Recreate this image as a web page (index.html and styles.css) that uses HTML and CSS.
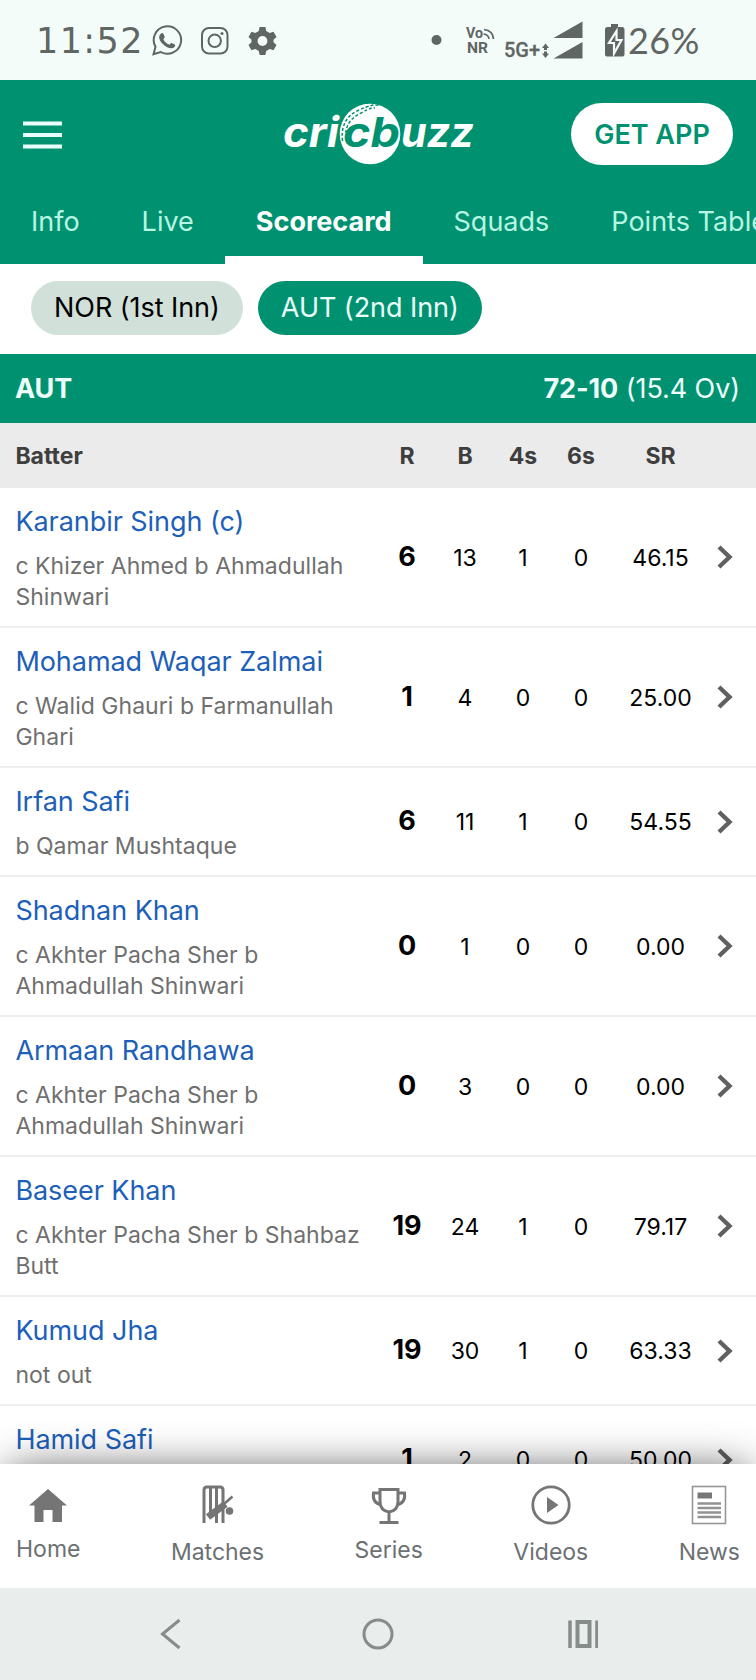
FILE: index.html
```html
<!DOCTYPE html>
<html lang="en">
<head>
<meta charset="utf-8">
<title>Cricbuzz Scorecard</title>
<link rel="stylesheet" href="styles.css">
</head>
<body>
<div class="screen">
  <header class="status">
    <span class="clock">11:52</span>
    <svg class="status-apps" width="126" height="32" viewBox="0 0 126 32" fill="none" stroke="#5f6664" stroke-width="2">
      <path d="M2.500 29.200l2-7.400a13.700 13.700 0 1 1 5.200 5.200z"/>
      <path d="M9.500 9c1.400-1.600 2.500-1 3 0l1.200 2.800c.3.900-1.400 2-1.200 2.600 1 2.400 3.300 4.200 5.600 5.200.8.300 1.700-1.900 2.600-1.600l3 1.500c1 .6.300 2.200-.7 3-3 2.200-8.200-.4-11.500-3.800-3.200-3.400-4.500-7-2-9.700z" fill="#5f6664" stroke="none"/>
      <rect x="51" y="3" width="25.500" height="25.500" rx="7"/>
      <circle cx="63.700" cy="15.800" r="6.200"/>
      <circle cx="71" cy="8.600" r="1.500" fill="#5f6664" stroke="none"/>
      <path d="M108.600 2h5.800l.8 4 3.500 2 3.800-1.300 3 5.200-3 2.900v2.400l3 2.900-3 5.200-3.800-1.300-3.500 2-.8 4h-5.800l-.8-4-3.500-2-3.800 1.300-3-5.200 3-2.900v-2.400l-3-2.900 3-5.200 3.800 1.300 3.500-2z" fill="#5f6664" stroke="none"/>
      <circle cx="111.500" cy="16" r="4.900" fill="#f4fcf9" stroke="none"/>
    </svg>
    <svg class="status-signal" width="196" height="40" viewBox="0 0 196 40" fill="#5f6664">
      <circle cx="5.500" cy="20" r="5"/>
      <text x="35" y="17.500" class="volte" textLength="17" lengthAdjust="spacingAndGlyphs">Vo</text>
      <text x="36" y="33" class="volte" textLength="21" lengthAdjust="spacingAndGlyphs">NR</text>
      <g fill="none" stroke="#5f6664" stroke-width="1.700"><path d="M53 9.500q9 1 9.500 9.500M52.500 14q5 .5 5.500 5"/></g>
      <text x="73" y="36.800" class="fiveg" textLength="36" lengthAdjust="spacingAndGlyphs">5G+</text>
      <path d="M111 28l3.500-4.500 3.500 4.500h-2v2h-3v-2zM111 33.500l3.500 4.500 3.500-4.500h-2v-2h-3v2z"/>
      <path d="M122.500 18l29-16.500V18zM122.500 38.500l29-16.500v16.500z"/>
      <path d="M180 4h7v3h4q2.500 0 2.500 2.500v25q0 2-2 2h-15.500q-2 0-2-2v-25Q174 7 176.500 7h3.500z"/>
      <path d="M185.500 11l-7.500 12h5v10.500l7.500-13.500h-5z" fill="#5f6664" stroke="#f4fcf9" stroke-width="2.200"/>
    </svg>
    <span class="percent">26%</span>
  </header>

  <div class="topbar">
    <svg class="menu" width="40" height="28" viewBox="0 0 40 28" fill="#e9fffb"><path d="M0 .5h39v4H0zM0 12h39v4H0zM0 23.500h39v4H0z"/></svg>
    <svg class="logo" width="192" height="64" viewBox="0 0 192 64">
      <circle cx="87" cy="32" r="30.300" fill="#fff"/>
      <path d="M59.500 39Q57 17 75 8.500T97 4.500" fill="none" stroke="#009270" stroke-width="1.500" stroke-dasharray="3 2"/>
      <path d="M63 36Q61 20 77 11.500T91 6.500" fill="none" stroke="#009270" stroke-width="1.500" stroke-dasharray="3 2"/>
      <text x="0" y="45" class="word" fill="#fff" textLength="56" lengthAdjust="spacingAndGlyphs">cri</text>
      <text x="60" y="45" class="word" fill="#009270" textLength="57" lengthAdjust="spacingAndGlyphs">cb</text>
      <text x="118" y="45" class="word" fill="#fff" textLength="73" lengthAdjust="spacingAndGlyphs">uzz</text>
    </svg>
    <a class="get-app">GET APP</a>
  </div>

  <nav class="tabs">
    <a class="tab">Info</a><a class="tab">Live</a><a class="tab active">Scorecard</a><a class="tab">Squads</a><a class="tab">Points Table</a>
  </nav>

  <div class="innings">
    <a class="pill">NOR (1st Inn)</a><a class="pill selected">AUT (2nd Inn)</a>
  </div>

  <div class="total"><b>AUT</b><span><b>72-10</b> (15.4 Ov)</span></div>

  <main class="card">
    <div class="row head"><div>Batter</div><div>R</div><div>B</div><div>4s</div><div>6s</div><div>SR</div></div>
    <div class="row"><div class="batter"><a>Karanbir Singh (c)</a><p>c Khizer Ahmed b Ahmadullah Shinwari</p></div><b>6</b><div>13</div><div>1</div><div>0</div><div>46.15</div><svg class="chev" viewBox="0 0 16 24"><path d="M2 2l10.500 10L2 22"/></svg></div>
    <div class="row"><div class="batter"><a>Mohamad Waqar Zalmai</a><p>c Walid Ghauri b Farmanullah Ghari</p></div><b>1</b><div>4</div><div>0</div><div>0</div><div>25.00</div><svg class="chev" viewBox="0 0 16 24"><path d="M2 2l10.500 10L2 22"/></svg></div>
    <div class="row short"><div class="batter"><a>Irfan Safi</a><p>b Qamar Mushtaque</p></div><b>6</b><div>11</div><div>1</div><div>0</div><div>54.55</div><svg class="chev" viewBox="0 0 16 24"><path d="M2 2l10.500 10L2 22"/></svg></div>
    <div class="row"><div class="batter"><a>Shadnan Khan</a><p>c Akhter Pacha Sher b Ahmadullah Shinwari</p></div><b>0</b><div>1</div><div>0</div><div>0</div><div>0.00</div><svg class="chev" viewBox="0 0 16 24"><path d="M2 2l10.500 10L2 22"/></svg></div>
    <div class="row"><div class="batter"><a>Armaan Randhawa</a><p>c Akhter Pacha Sher b Ahmadullah Shinwari</p></div><b>0</b><div>3</div><div>0</div><div>0</div><div>0.00</div><svg class="chev" viewBox="0 0 16 24"><path d="M2 2l10.500 10L2 22"/></svg></div>
    <div class="row"><div class="batter"><a>Baseer Khan</a><p>c Akhter Pacha Sher b Shahbaz Butt</p></div><b>19</b><div>24</div><div>1</div><div>0</div><div>79.17</div><svg class="chev" viewBox="0 0 16 24"><path d="M2 2l10.500 10L2 22"/></svg></div>
    <div class="row short"><div class="batter"><a>Kumud Jha</a><p>not out</p></div><b>19</b><div>30</div><div>1</div><div>0</div><div>63.33</div><svg class="chev" viewBox="0 0 16 24"><path d="M2 2l10.500 10L2 22"/></svg></div>
    <div class="row short"><div class="batter"><a>Hamid Safi</a></div><b>1</b><div>2</div><div>0</div><div>0</div><div>50.00</div><svg class="chev" viewBox="0 0 16 24"><path d="M2 2l10.500 10L2 22"/></svg></div>
  </main>

  <nav class="bottom">
    <a class="item home"><svg width="40" height="40" viewBox="0 0 40 40" fill="#757575"><path d="M20 4L1 20.500h5.500V37H15.500V25h9v12H34V20.500h5z"/></svg>Home</a>
    <a class="item"><svg width="40" height="40" viewBox="0 0 40 40" fill="none" stroke="#757575" stroke-width="3"><path d="M6 38V5q0-3 3-3h13q3 0 3 3v33M12.500 3v29M18.500 3v35" stroke-width="3"/><path d="M34.500 11.500L26 19" stroke-width="2.500"/><path d="M27.500 19L10 32" stroke-width="7"/><circle cx="31.500" cy="26" r="3.800" fill="#757575" stroke="none"/></svg>Matches</a>
    <a class="item series"><svg width="40" height="40" viewBox="0 0 40 40" fill="none" stroke="#757575" stroke-width="3"><path d="M11 4.500h18v12q0 9-9 10.500-9-1.500-9-10.500zM20 27v10M10.500 37.500h19M11 8H4.500Q3 18 12.500 20M29 8h6.500q1.500 10-8 12"/></svg>Series</a>
    <a class="item"><svg width="40" height="40" viewBox="0 0 40 40"><circle cx="20" cy="20" r="18.200" fill="none" stroke="#757575" stroke-width="2.800"/><path d="M16 12l11.500 8L16 28z" fill="#757575"/></svg>Videos</a>
    <a class="item"><svg width="40" height="40" viewBox="0 0 40 40"><rect x="3.500" y="1.500" width="33" height="37" fill="none" stroke="#969696" stroke-width="1.600"/><path d="M8.500 7.500H23v6H8.500z" fill="#777"/><path d="M8.500 18.500H32M8.500 23H32M8.500 27.500H32M8.500 32H32" stroke="#929292" stroke-width="2.700"/></svg>News</a>
  </nav>

  <footer class="system">
    <svg width="440" height="32" viewBox="0 0 440 32" fill="none" stroke="#868c89" stroke-width="3"><path d="M21.500 2L4.500 16l17 14"/><circle cx="220" cy="16" r="14"/><path d="M412 2v27.500M439 2v27.500" stroke-width="3.500" transform="translate(0 .5)"/><rect x="419.500" y="4" width="12" height="24" stroke-width="4"/></svg>
  </footer>
</div>
</body>
</html>
```
FILE: styles.css
```css
* { box-sizing: border-box; }
body { margin: 0; background: #fff; font-family: Inter, "Liberation Sans", sans-serif; font-size: 27px; color: #000; }
.screen { width: 756px; height: 1680px; overflow: hidden; display: flex; flex-direction: column; }

.status { height: 80px; flex: none; background: #f4fcf9; color: #5f6664; display: flex; align-items: center; padding-left: 36px; }
.clock { width: 115px; font: 35px/42px "DejaVu Sans", sans-serif; letter-spacing: 1.4px; padding-top: 2px; }
.status-apps { flex: none; margin-top: 1px; }
.status-signal { flex: none; margin-left: 154px; }
.volte { font: bold 14px Roboto, sans-serif; }
.fiveg { font: 500 20.5px Roboto, sans-serif; stroke: #5f6664; stroke-width: .3; }
.percent { font: 36px/42px Lato, sans-serif; letter-spacing: .4px; margin-left: 1px; }

.topbar { height: 107px; flex: none; background: #009270; display: flex; align-items: center; padding: 1px 23px 0; }
.menu { margin-top: 1px; }
.logo { margin-left: 220px; }
.word { font: italic 700 41px Inter, sans-serif; }
.get-app { margin-left: auto; width: 162px; height: 62px; border-radius: 31px; background: #fff; color: #009270; font-weight: 600; display: grid; place-items: center; }

.tabs { height: 77px; flex: none; background: #009270; display: flex; white-space: nowrap; }
.tab { padding: 0 31px; line-height: 70px; height: 77px; color: #b8f6e4; }
.tab.active { color: #fff; font-weight: 700; border-bottom: 8px solid #fff; }

.innings { height: 90px; flex: none; display: flex; gap: 15px; padding: 17px 31px 19px; }
.pill { height: 54px; line-height: 53px; padding: 0 23px; border-radius: 27px; background: #d1e0d9; letter-spacing: -.05px; }
.pill.selected { background: #009270; color: #edfffa; }

.total { height: 69px; flex: none; background: #009270; color: #effffb; display: flex; align-items: center; justify-content: space-between; padding: 0 16px 0 15px; letter-spacing: -.08px; }
.total b { font-weight: 700; }

.card { flex: 1; min-height: 0; overflow: hidden; }
.row { height: 140px; display: grid; grid-template-columns: 362.6px 58px 58px 58px 58px 101px 29px; align-items: center; padding-left: 15.4px; border-bottom: 2px solid #efefef; text-align: center; font-size: 23px; }
.row.short { height: 109px; }
.row.head { height: 65px; background: #eaebea; border: 0; font-weight: 700; color: #3e3e3e; }
.row.head div:first-child, .batter { text-align: left; }
.row > div:not(.batter) { padding-top: 1px; }
.row > b { font-size: 27px; font-weight: 700; padding-bottom: 2px; }
.batter { align-self: start; padding-top: 14px; }
.batter a { display: block; line-height: 39px; font-size: 27px; letter-spacing: -.05px; color: #1d5fb9; }
.batter p { margin: 10px 0 0; line-height: 31px; letter-spacing: .03px; color: #6f6f6f; }
.chev { width: 16px; height: 24px; justify-self: center; fill: none; stroke: #606060; stroke-width: 4.4; }

.bottom { position: relative; height: 124px; flex: none; background: #fff; box-shadow: 0 0 44px -8px rgba(0,0,0,.75); display: flex; justify-content: space-between; padding: 21px 16px 0; font-size: 23px; color: #6b7073; }
.item { display: flex; flex-direction: column; align-items: center; gap: 13px; line-height: 28px; }
.home { gap: 10px; }
.series { gap: 11px; }

.system { position: relative; height: 92px; flex: none; background: #e9eeec; display: flex; align-items: center; justify-content: center; }
```
